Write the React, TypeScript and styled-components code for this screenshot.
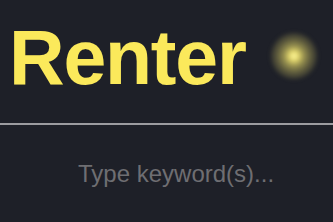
import React from 'react'
import styled, { createGlobalStyle } from 'styled-components'

const Global = createGlobalStyle`
  html, body {
    margin: 0;
    padding: 0;
    background: #1e2028;
  }
  body {
    font-family: 'Liberation Sans', Arial, sans-serif;
    width: 333px;
    height: 222px;
    overflow: hidden;
  }
`

const Page = styled.div`
  display: flex;
  flex-direction: column;
  width: 333px;
  height: 222px;
  background: #1e2028;
`

const Header = styled.header`
  display: flex;
  align-items: flex-start;
  height: 125px;
  padding: 19px 0 0 9px;
  box-sizing: border-box;
  border-bottom: 2px solid #9c9ca0;
`

const Title = styled.h1`
  margin: 0;
  font-size: 77px;
  line-height: 1;
  font-weight: 700;
  letter-spacing: -1.2px;
  color: #fbe95b;
`

// soft light bulb: bright core fading into a hazy yellow halo
const Glow = styled.div`
  width: 46px;
  height: 46px;
  margin: 14px 0 0 25px;
  border-radius: 50%;
  filter: blur(2px);
  background: radial-gradient(
    circle,
    #fffbb0 0%,
    #ede070 12%,
    rgba(200, 190, 95, 0.72) 30%,
    rgba(145, 138, 78, 0.45) 56%,
    rgba(85, 84, 60, 0.22) 80%,
    rgba(30, 32, 40, 0) 100%
  );
`

const Search = styled.input`
  margin: 34px 0 0 0;
  padding: 0 0 0 78px;
  border: none;
  outline: none;
  background: transparent;
  font-family: 'Liberation Sans', Arial, sans-serif;
  font-size: 24px;
  height: 30px;
  color: #d0d0d0;
  &::placeholder {
    color: #6e6e72;
  }
`

export default function App() {
  return (
    <Page>
      <Global />
      <Header>
        <Title>Renter</Title>
        <Glow />
      </Header>
      <Search placeholder="Type keyword(s)..." />
    </Page>
  )
}
